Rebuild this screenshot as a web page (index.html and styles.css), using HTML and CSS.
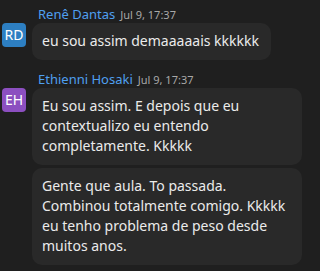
FILE: index.html
```html
<!DOCTYPE html>
<html lang="pt">
<head>
<meta charset="utf-8">
<link rel="stylesheet" href="styles.css">
</head>
<body>
<div class="chat">
  <section class="group group-first">
    <div class="meta"><span class="name">Renê Dantas</span><span class="time">Jul 9, 17:37</span></div>
    <div class="row">
      <div class="avatar av-blue">RD</div>
      <div class="bubble">eu sou assim demaaaaais kkkkkk</div>
    </div>
  </section>
  <section class="group">
    <div class="meta"><span class="name">Ethienni Hosaki</span><span class="time">Jul 9, 17:37</span></div>
    <div class="row">
      <div class="avatar av-purple">EH</div>
      <div class="bubble">Eu sou assim. E depois que eu contextualizo eu entendo completamente. Kkkkk</div>
    </div>
    <div class="row">
      <div class="avatar-spacer"></div>
      <div class="bubble">Gente que aula. To passada. Combinou totalmente comigo. Kkkkk eu tenho problema de peso desde muitos anos.</div>
    </div>
  </section>
</div>
</body>
</html>
```
FILE: styles.css
```css
html, body {
  margin: 0;
  padding: 0;
  background: #1f1f1f;
}
body {
  font-family: "Noto Sans", "Open Sans", sans-serif;
  color: #ebebeb;
  width: 320px;
  height: 271px;
  overflow: hidden;
}
.chat {
  display: flex;
  flex-direction: column;
}
.group {
  display: flex;
  flex-direction: column;
  gap: 3px;
  margin-top: 10px;
}
.group-first {
  margin-top: 5px;
}
.meta {
  padding-left: 38px;
  height: 16px;
  line-height: 16px;
  margin-bottom: -1px;
  white-space: nowrap;
}
.name {
  font-size: 13px;
  color: #4f9ff0;
}
.time {
  font-size: 11px;
  color: #a8a8a8;
  margin-left: 5px;
}
.row {
  display: flex;
  align-items: flex-start;
  gap: 6px;
  padding-left: 2px;
}
.avatar, .avatar-spacer {
  flex: 0 0 24px;
  width: 24px;
  height: 24px;
}
.avatar {
  border-radius: 4px;
  color: #ffffff;
  font-size: 14px;
  line-height: 24px;
  text-align: center;
}
.av-blue { background: #2d7fc2; }
.av-purple { background: #8c4fc0; }
.bubble {
  background: #292929;
  border-radius: 10px;
  padding: 8px 12px 9px 10px;
  font-size: 14px;
  line-height: 20px;
  max-width: 248px;
}
```
